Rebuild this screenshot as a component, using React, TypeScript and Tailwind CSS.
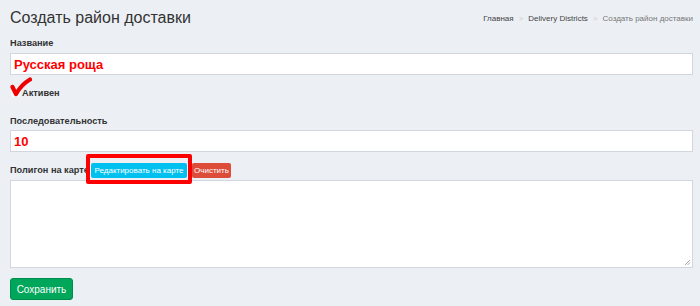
import React from "react";

const halo =
  "[text-shadow:1px_1px_0_#fff,-1px_-1px_0_#fff,1px_-1px_0_#fff,-1px_1px_0_#fff,0_2px_1px_#fff]";

function RedCheck() {
  return (
    <svg
      className="absolute left-0 top-[-7px] w-[22px] h-[20px]"
      viewBox="0 0 22 20"
      fill="none"
    >
      <path
        d="M2.5 10 L6 17 C10 10 14 6 20 2.5"
        stroke="#ee0000"
        strokeWidth="4.2"
        strokeLinecap="round"
        strokeLinejoin="round"
      />
    </svg>
  );
}

export default function App() {
  return (
    <div className="w-[700px] h-[306px] bg-[#ecf0f5] pl-[10px] pr-[7px] font-['Liberation_Sans',Arial,sans-serif] text-[#333] overflow-hidden">
      <div className="flex items-center justify-between h-[36px]">
        <h1 className="text-[16px] leading-none text-[#333]">Создать район доставки</h1>
        <div className="flex items-center gap-[5px] text-[8px] mt-[2px]">
          <span className="text-[#444]">Главная</span>
          <span className="text-[#ccc]">&gt;</span>
          <span className="text-[#444]">Delivery Districts</span>
          <span className="text-[#ccc]">&gt;</span>
          <span className="text-[#777]">Создать район доставки</span>
        </div>
      </div>

      <label className="block text-[9.2px] font-bold leading-none mt-[3px]">Название</label>
      <div className="mt-[5px] h-[22px] bg-white border border-[#d2d6de] flex items-center pl-[3px]">
        <span className={`text-[13px] font-bold text-[#f00] leading-none ${halo}`}>Русская роща</span>
      </div>

      <div className="relative flex items-center h-[16px] mt-[9px]">
        <span className="w-[10px] h-[10px] ml-[1px] bg-white/60 rounded-[2px]" />
        <RedCheck />
        <span className="ml-[1px] mt-[3px] text-[9.2px] font-bold leading-none">Активен</span>
      </div>

      <label className="block text-[9.2px] font-bold leading-none mt-[17px]">Последовательность</label>
      <div className="mt-[4px] h-[22px] bg-white border border-[#d2d6de] flex items-center pl-[3px]">
        <span className={`text-[13px] font-bold text-[#f00] leading-none ${halo}`}>10</span>
      </div>

      <div className="flex items-center h-[15px] mt-[11px]">
        <label className="text-[9.2px] font-bold leading-none w-[81px] whitespace-nowrap overflow-visible">
          Полигон на карте
        </label>
        <div className="relative flex items-center gap-[5px] z-10">
          <span className="absolute left-[-5px] top-[-9px] w-[106px] h-[30px] border-[4px] border-[#ff0000] rounded-[2px] bg-[#ecf0f5] -z-10" />
          <button className="h-[15px] w-[96px] bg-[#00c0ef] text-white text-[8px] rounded-[2px] leading-none whitespace-nowrap">
            Редактировать на карте
          </button>
          <button className="h-[15px] w-[39px] bg-[#dd4b39] text-white text-[8px] rounded-[2px] leading-none">
            Очистить
          </button>
        </div>
      </div>

      <div className="relative mt-[2px] h-[88px] bg-white border border-[#d2d6de]">
        <svg className="absolute right-[1px] bottom-[1px] w-[7px] h-[7px]" viewBox="0 0 7 7">
          <path d="M6 1 L1 6 M6 3.5 L3.5 6" stroke="#aaa" strokeWidth="1" />
        </svg>
      </div>

      <button className="mt-[10px] h-[22px] w-[63px] bg-[#00a65a] text-white text-[10px] rounded-[3px] border border-[#008d4c]">
        Сохранить
      </button>
    </div>
  );
}
